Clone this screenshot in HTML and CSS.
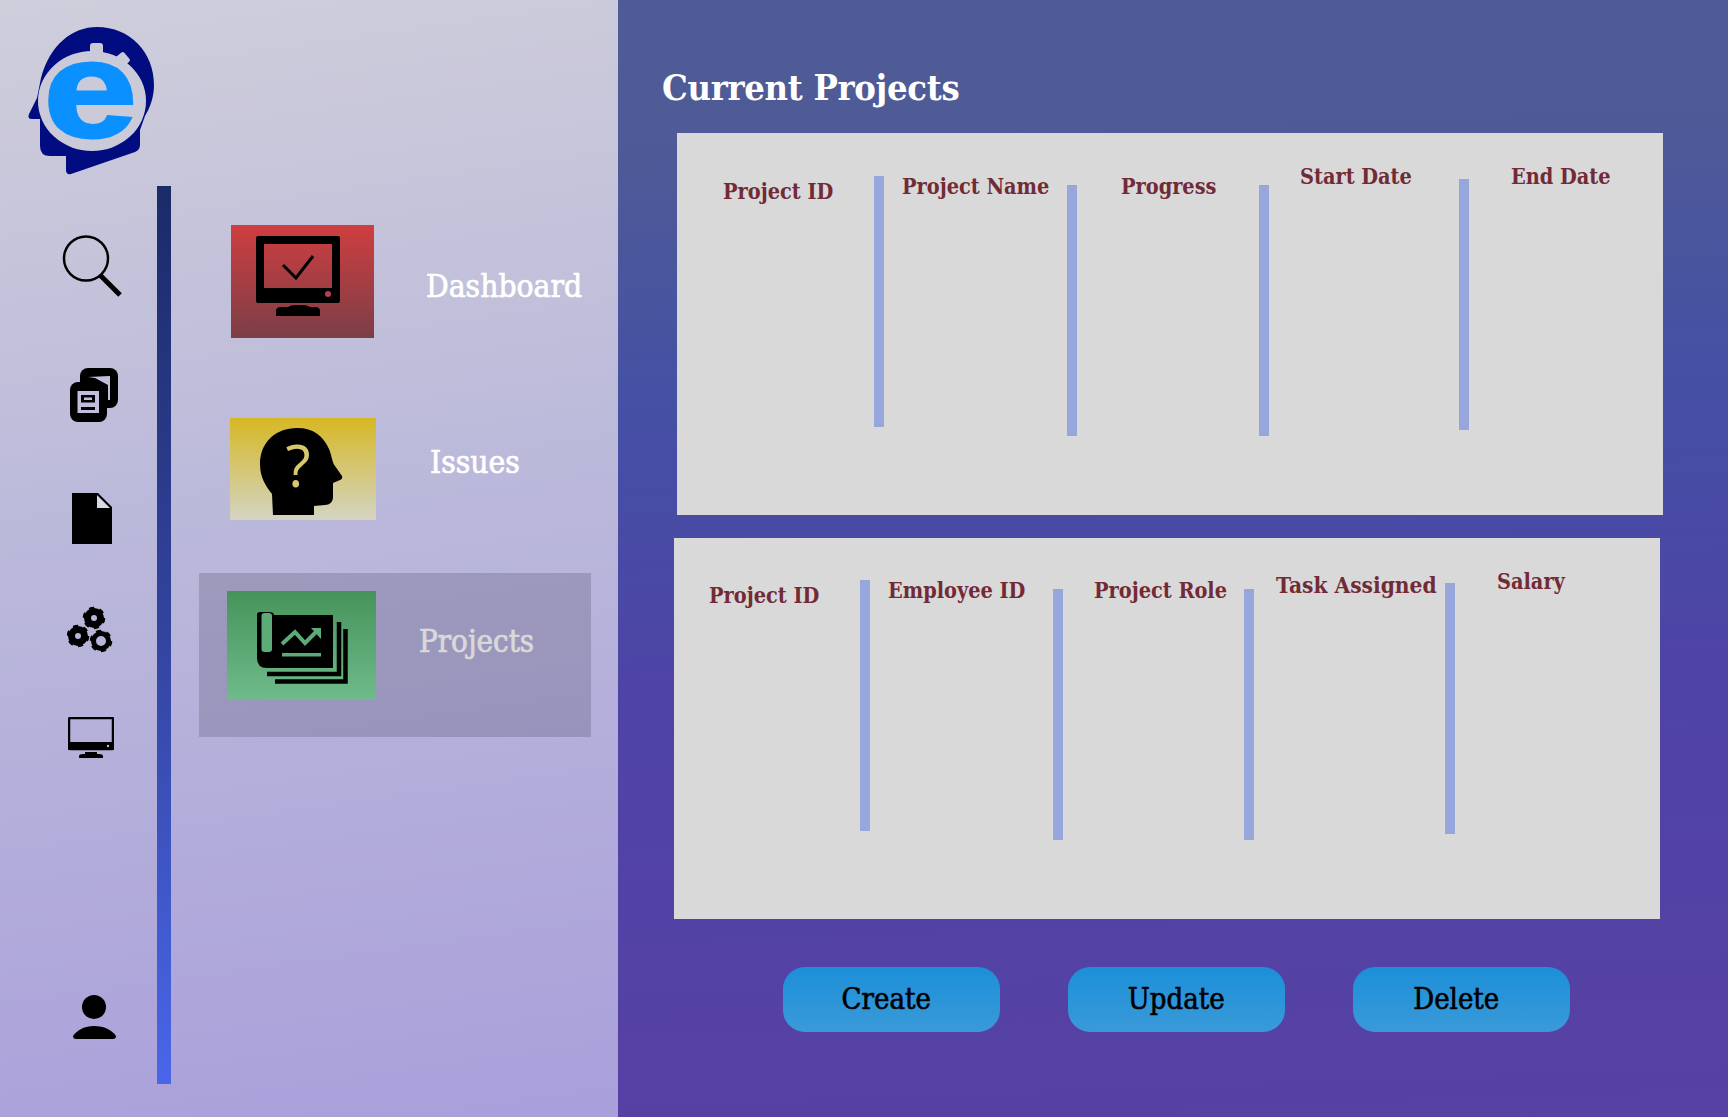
FILE: index.html
```html
<!DOCTYPE html>
<html lang="en">
<head>
<meta charset="utf-8">
<title>Current Projects</title>
<link rel="stylesheet" href="styles.css">
</head>
<body>
<div class="app">
  <aside class="sidebar">
    <div class="rail">
      <svg class="logo" viewBox="0 0 157 186" aria-label="Logo">
        <path class="logo-head" d="M41 78C50 45 72 27 97 27C130 27 154 52 154 85C154 97 150 108 145 116L140 130V145Q140 150 135 152L71 174Q66 175 66 170V156H50Q40 156 40 146V119H32Q27 119 29 114L37 98Z"/>
        <ellipse class="logo-ring" cx="92" cy="101" rx="54" ry="50"/>
        <rect class="logo-ring" x="90" y="43" width="13" height="12" rx="3"/>
        <rect class="logo-ring" x="118" y="53" width="10" height="12" rx="2" transform="rotate(-40 123 59)"/>
        <text class="logo-e" transform="translate(43.500 137) scale(1.220 1)">e</text>
      </svg>
      <svg class="ico ico-search" viewBox="0 0 62 63">
        <circle cx="26" cy="23.500" r="22" class="line line-2"/>
        <path d="M40 40L60 60" class="line line-5"/>
      </svg>
      <svg class="ico ico-copy" viewBox="0 0 50 54">
        <rect x="11" y="0" width="38" height="40" rx="8"/>
        <path class="cut" d="M19 9L41 8V32H39V17L26 10Z"/>
        <rect x="1" y="14" width="37" height="40" rx="8"/>
        <rect class="cut" x="8.500" y="23" width="21.500" height="22"/>
        <rect x="12" y="27" width="14" height="7.500"/>
        <rect class="cut" x="15" y="29.500" width="8" height="2.500"/>
        <rect x="12" y="39" width="14" height="3"/>
      </svg>
      <svg class="ico ico-file" viewBox="0 0 40 51">
        <path d="M0 0H26L40 14V51H0Z"/>
        <path class="fold" d="M25 2L38 15H25Z"/>
      </svg>
      <svg class="ico ico-gears" viewBox="0 0 46 47">
        <g transform="translate(27 12)"><circle r="6.500" class="line line-7"/><circle r="9.800" class="line teeth"/></g>
        <g transform="translate(11 30)"><circle r="6.500" class="line line-7"/><circle r="9.800" class="line teeth"/></g>
        <g transform="translate(34 35)"><circle r="7.500" class="line line-5"/><circle r="9.800" class="line teeth"/></g>
      </svg>
      <svg class="ico ico-monitor" viewBox="0 0 46 41">
        <rect x="1" y="1" width="44" height="31" rx="1" class="line line-2"/>
        <rect x="0" y="25" width="46" height="8" rx="1"/>
        <circle class="cut" cx="40" cy="29" r="1.200"/>
        <path d="M11 41V39Q11 37 15 37H17V35H29V37H31Q35 37 35 39V41Z"/>
      </svg>
      <svg class="ico ico-user" viewBox="0 0 43 45">
        <circle cx="21" cy="13" r="12"/>
        <path d="M0 42C4 36 12 32 21 32C31 32 39 36 43 42Q43 45 40 45H3Q0 45 0 42Z"/>
      </svg>
    </div>
    <div class="bar"></div>
    <nav class="nav">
      <a class="nav-item item-dash">
        <svg class="tile tile-red" viewBox="0 0 143 113">
          <path fill-rule="evenodd" d="M27 11H107Q109 11 109 13V76Q109 78 107 78H27Q25 78 25 76V13Q25 11 27 11ZM33 19V63H101V19Z"/>
          <circle class="dot-red" cx="97" cy="69" r="3"/>
          <path d="M45 91V86Q45 82 50 82H57Q60 80 64 80H72Q76 80 79 82H84Q89 82 89 86V91Z"/>
          <path class="check" d="M52 40L65 53L82 31"/>
        </svg>
        <span class="nav-label">Dashboard</span>
      </a>
      <a class="nav-item item-issues">
        <svg class="tile tile-yellow" viewBox="0 0 146 102">
          <path d="M43 97L42 76C36 68 30 60 30 46C30 24 46 10 67 10C84 10 93 18 99 31C102 38 102 44 105 48L112 58Q113 61 110 62L103 65V80Q102 87 95 87L84 88V97Z"/>
          <text class="q" x="68" y="69">?</text>
        </svg>
        <span class="nav-label">Issues</span>
      </a>
      <a class="nav-item item-projects">
        <svg class="tile tile-green" viewBox="0 0 149 109">
          <path class="sheet" d="M112 31V83H40"/>
          <path class="sheet" d="M118.500 38V90.500H48"/>
          <path d="M30 24Q30 21 33 21H42Q47 21 47 24H106V77H40Q30 77 30 67Z"/>
          <rect class="gr" x="34.500" y="22" width="10.500" height="39" rx="3"/>
          <path class="gr-line" d="M55 53L68 41L78 52L90 40"/>
          <path class="gr-fill" d="M84 37H94V48Z"/>
          <rect class="gr" x="55" y="62" width="39" height="3.500"/>
        </svg>
        <span class="nav-label">Projects</span>
      </a>
    </nav>
  </aside>
  <main class="main">
    <h1 class="title">Current Projects</h1>
    <section class="panel panel-a">
      <div class="col a1"><span class="th">Project ID</span><i class="rule"></i></div>
      <div class="col a2"><span class="th">Project Name</span><i class="rule"></i></div>
      <div class="col a3"><span class="th">Progress</span><i class="rule"></i></div>
      <div class="col a4"><span class="th">Start Date</span><i class="rule"></i></div>
      <div class="col a5"><span class="th">End Date</span></div>
    </section>
    <section class="panel panel-b">
      <div class="col b1"><span class="th">Project ID</span><i class="rule"></i></div>
      <div class="col b2"><span class="th">Employee ID</span><i class="rule"></i></div>
      <div class="col b3"><span class="th">Project Role</span><i class="rule"></i></div>
      <div class="col b4"><span class="th">Task Assigned</span><i class="rule"></i></div>
      <div class="col b5"><span class="th">Salary</span></div>
    </section>
    <div class="actions">
      <button class="btn">Create</button>
      <button class="btn btn-center">Update</button>
      <button class="btn">Delete</button>
    </div>
  </main>
</div>
</body>
</html>
```

FILE: styles.css
```css
* { box-sizing: border-box; }
html, body { margin: 0; height: 100%; }
body { font-family: "DejaVu Serif Condensed", "DejaVu Serif", serif; overflow: hidden; }
.app { display: flex; width: 1728px; height: 1117px; }

.sidebar { display: flex; width: 618px; height: 1117px; background: linear-gradient(172deg, #cfcedb 0%, #bbb9da 45%, #a99fdb 100%); }
.rail { width: 157px; display: flex; flex-direction: column; align-items: flex-start; }
.logo { display: block; width: 157px; height: 186px; flex: none; }
.logo-head { fill: #000c80; }
.logo-ring { fill: #cbcad9; }
.logo-e { font-family: "Liberation Sans", sans-serif; font-weight: 700; font-size: 138px; fill: #0a90ff; stroke: #0a90ff; stroke-width: 3px; }

.ico { display: block; flex: none; fill: #000; }
.line { fill: none; stroke: #000; }
.line-2 { stroke-width: 2.500px; }
.line-5 { stroke-width: 5px; }
.line-7 { stroke-width: 7px; }
.teeth { stroke-width: 3px; stroke-dasharray: 5 5.260; }
.cut { fill: #c0bedb; }
.fold { fill: #d9d8e6; }
.ico-search { width: 62px; height: 63px; margin: 49px 0 0 60px; }
.ico-copy { width: 50px; height: 54px; margin: 70px 0 0 69px; }
.ico-file { width: 40px; height: 51px; margin: 71px 0 0 72px; }
.ico-gears { width: 46px; height: 47px; margin: 62px 0 0 67px; }
.ico-monitor { width: 46px; height: 41px; margin: 64px 0 0 68px; }
.ico-user { width: 43px; height: 45px; margin: 236px 0 0 73px; }

.bar { width: 14px; height: 898px; margin-top: 186px; flex: none; background: linear-gradient(180deg, #1b2a68 0%, #33449f 50%, #4866e8 100%); }

.nav { display: flex; flex-direction: column; padding: 225px 0 0 28px; width: 447px; }
.nav-item { display: flex; align-items: flex-start; color: #fff; font-size: 31.500px; line-height: 40px; }
.nav-label { -webkit-text-stroke: 0.7px currentColor; }
.tile { display: block; flex: none; }
.tile-red { width: 143px; height: 113px; background: linear-gradient(180deg, #cf3e40, #7c3e47); }
.tile-yellow { width: 146px; height: 102px; background: linear-gradient(180deg, #d6b824, #d4d4c4); }
.tile-green { width: 149px; height: 109px; background: linear-gradient(180deg, #46935a, #6fbb8b); }
.item-dash { padding-left: 32px; }
.item-dash .nav-label { margin: 41px 0 0 52px; }
.item-issues { margin-top: 80px; padding-left: 31px; }
.item-issues .nav-label { margin: 24px 0 0 54px; }
.item-projects { margin-top: 53px; width: 392px; height: 164px; padding: 18px 0 0 28px; background: rgba(60, 55, 80, 0.22); color: #d9d9d9; }
.item-projects .nav-label { margin: 30px 0 0 43px; font-size: 31px; }
.dot-red { fill: #b0444c; }
.check { fill: none; stroke: #000; stroke-width: 3px; }
.q { font-family: "Open Sans", sans-serif; font-weight: 400; font-size: 58px; text-anchor: middle; fill: #d8c870; }
.sheet { fill: none; stroke: #000; stroke-width: 4.500px; }
.gr { fill: #5dab77; }
.gr-line { fill: none; stroke: #5dab77; stroke-width: 4px; }
.gr-fill { fill: #5dab77; }

.main { flex: 1; padding: 65px 0 0 44px; background: linear-gradient(178deg, #4f5b96 0%, #4f5b96 12%, #4450a4 36%, #4e44a6 60%, #5840a4 100%); }
.title { margin: 0 0 24px; color: #fff; font-size: 36px; line-height: 44px; font-weight: 700; letter-spacing: -0.3px; }
.panel { display: flex; width: 986px; background: #d9d9d9; }
.panel-a { height: 382px; margin-left: 15px; }
.panel-b { height: 381px; margin: 23px 0 0 12px; }
.col { display: flex; align-items: flex-start; justify-content: space-between; flex: none; height: 100%; }
.th { display: block; color: #722b36; font-size: 21.500px; line-height: 28px; font-weight: 700; white-space: nowrap; }
.rule { display: block; flex: none; width: 10px; height: 251px; background: #98a7db; }

.a1 { width: 207px; padding-left: 46px; }
.a1 .th { margin-top: 45px; } .a1 .rule { margin-top: 43px; }
.a2 { width: 193px; padding-left: 18px; }
.a2 .th { margin-top: 40px; } .a2 .rule { margin-top: 52px; }
.a3 { width: 192px; padding-left: 44px; }
.a3 .th { margin-top: 40px; } .a3 .rule { margin-top: 52px; }
.a4 { width: 200px; padding-left: 31px; }
.a4 .th { margin-top: 30px; } .a4 .rule { margin-top: 46px; }
.a5 { width: 194px; padding-left: 42px; }
.a5 .th { margin-top: 30px; }

.b1 { width: 196px; padding-left: 35px; }
.b1 .th { margin-top: 44px; } .b1 .rule { margin-top: 42px; }
.b2 { width: 193px; padding-left: 18px; }
.b2 .th { margin-top: 39px; } .b2 .rule { margin-top: 51px; }
.b3 { width: 191px; padding-left: 31px; }
.b3 .th { margin-top: 39px; } .b3 .rule { margin-top: 51px; }
.b4 { width: 201px; padding-left: 22px; }
.b4 .th { margin-top: 33px; } .b4 .th { font-size: 22.500px; } .b4 .rule { margin-top: 45px; }
.b5 { width: 205px; padding-left: 42px; }
.b5 .th { margin-top: 30px; }

.actions { display: flex; gap: 68.500px; margin: 48px 0 0 121px; }
.btn { width: 216.500px; height: 65px; padding: 0 10px 2px 0; border: 0; border-radius: 22px; background: linear-gradient(180deg, #1c8fd8, #3a9ad8); color: #000; font-family: inherit; font-size: 29px; font-weight: 500; -webkit-text-stroke: 0.6px #000; }
.btn-center { padding-right: 0; }
```
